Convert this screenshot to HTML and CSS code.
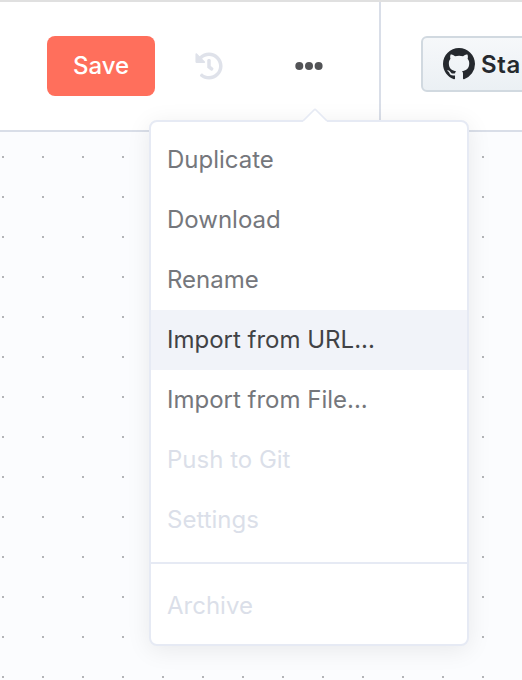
FILE: index.html
```html
<!DOCTYPE html>
<html lang="en">
<head>
<meta charset="utf-8">
<title>Workflow</title>
<link rel="stylesheet" href="styles.css">
</head>
<body>
<div class="app">
  <header class="header">
    <div class="actions">
      <button class="save">Save</button>
      <svg class="history" viewBox="0 0 512 512"><path fill="currentColor" d="M504 255.531c.253 136.64-111.18 248.372-247.82 248.468-59.015.042-113.223-20.53-155.822-54.911-11.077-8.94-11.905-25.541-1.839-35.607l11.267-11.267c8.609-8.609 22.353-9.551 31.891-1.984C173.062 425.135 212.781 440 256 440c101.705 0 184-82.311 184-184 0-101.705-82.311-184-184-184-48.814 0-93.149 18.969-126.068 49.932l50.754 50.754c10.08 10.08 2.941 27.314-11.313 27.314H24c-8.837 0-16-7.163-16-16V38.627c0-14.254 17.234-21.393 27.314-11.314l49.372 49.372C129.209 34.136 189.552 8 256 8c136.81 0 247.747 110.78 248 247.531zm-180.912 78.784l9.823-12.63c8.138-10.463 6.253-25.542-4.21-33.679L288 256.349V152c0-13.255-10.745-24-24-24h-16c-13.255 0-24 10.745-24 24v135.651l65.409 50.874c10.463 8.137 25.541 6.253 33.679-4.21z"/></svg>
      <svg class="more" viewBox="0 0 28 8"><g fill="currentColor"><circle cx="4.3" cy="4" r="4"/><circle cx="14" cy="4" r="4"/><circle cx="23.6" cy="4" r="4"/></g></svg>
    </div>
    <div class="github">
      <a class="star">
        <svg class="octocat" viewBox="0 0 16 16"><path fill="currentColor" d="M8 0C3.58 0 0 3.58 0 8c0 3.54 2.29 6.53 5.47 7.59.4.07.55-.17.55-.38 0-.19-.01-.82-.01-1.49-2.01.37-2.53-.49-2.69-.94-.09-.23-.48-.94-.82-1.13-.28-.15-.68-.52-.01-.53.63-.01 1.08.58 1.23.82.72 1.21 1.87.87 2.33.66.07-.52.28-.87.51-1.07-1.78-.2-3.64-.89-3.64-3.95 0-.87.31-1.59.82-2.15-.08-.2-.36-1.02.08-2.12 0 0 .67-.21 2.2.82.64-.18 1.32-.27 2-.27s1.36.09 2 .27c1.53-1.04 2.2-.82 2.2-.82.44 1.1.16 1.92.08 2.12.51.56.82 1.27.82 2.15 0 3.07-1.87 3.75-3.65 3.95.29.25.54.73.54 1.48 0 1.07-.01 1.93-.01 2.2 0 .21.15.46.55.38A8.01 8.01 0 0 0 16 8c0-4.42-3.58-8-8-8z"/></svg>
        <span>Sta</span>
      </a>
    </div>
  </header>
  <main class="canvas"></main>
  <div class="menu">
    <svg class="arrow" viewBox="0 0 24 14"><path class="arrow-fill" d="M0 14V12.5L12 1l12 11.5V14z"/><path class="arrow-line" d="M0 13 11 2Q12 1 13 2L24 13"/></svg>
    <ul class="items">
      <li class="item">Duplicate</li>
      <li class="item">Download</li>
      <li class="item">Rename</li>
      <li class="item active">Import from URL...</li>
      <li class="item">Import from File...</li>
      <li class="item disabled">Push to Git</li>
      <li class="item disabled">Settings</li>
      <li class="item disabled divided">Archive</li>
    </ul>
  </div>
</div>
</body>
</html>
```
FILE: styles.css
```css
* { box-sizing: border-box; }
body {
  margin: 0;
  font-family: Inter, sans-serif;
  overflow: hidden;
}
.app {
  position: relative;
  display: flex;
  flex-direction: column;
  height: 680px;
  overflow: hidden;
}
.header {
  display: flex;
  flex: none;
  height: 132px;
  border-top: 2px solid #e0e0e0;
  border-bottom: 2px solid #d9dee8;
  background: #fff;
}
.actions {
  display: flex;
  align-items: center;
  width: 381px;
  padding-left: 47px;
  border-right: 2px solid #d9dee8;
}
.save {
  width: 108px;
  height: 60px;
  padding: 0;
  border: 0;
  border-radius: 8px;
  background: #ff6f5c;
  color: #fff;
  font: 500 24px/60px Inter, sans-serif;
}
.history {
  width: 28px;
  height: 28px;
  margin-left: 40px;
  color: #dfe2ea;
}
.more {
  width: 28px;
  height: 8px;
  margin-left: 72px;
  color: #525356;
}
.github {
  flex: 1;
  min-width: 0;
  padding: 34px 0 0 40px;
}
.star {
  display: flex;
  align-items: center;
  gap: 6px;
  width: 130px;
  height: 56px;
  padding-left: 20px;
  border: 2px solid #d1d9e0;
  border-radius: 6px;
  background: linear-gradient(#f6f8fa, #ebf0f4);
  color: #25292e;
  font-size: 24px;
  font-weight: 600;
  letter-spacing: 0.6px;
}
.octocat {
  width: 32px;
  height: 32px;
}
.canvas {
  flex: 1;
  background: #fbfcfe conic-gradient(from 90deg at 38px 38px, #b3b4b7 90deg, transparent 0) 4px -14px / 40px 40px;
}
.menu {
  position: absolute;
  left: 149px;
  top: 120px;
  width: 320px;
  height: 526px;
  border: 2px solid #e6eaf4;
  border-radius: 8px;
  background: #fff;
  box-shadow: 0 4px 24px rgba(0, 0, 0, 0.08);
}
.arrow {
  position: absolute;
  left: 152px;
  top: -14px;
  width: 24px;
  height: 14px;
}
.arrow-fill { fill: #fff; }
.arrow-line {
  fill: none;
  stroke: #e6eaf4;
  stroke-width: 1.7;
}
.items {
  margin: 0;
  padding: 8px 0;
  list-style: none;
}
.item {
  height: 60px;
  padding-left: 16px;
  color: #75777c;
  font-size: 24px;
  line-height: 59px;
}
.active {
  background: #f1f3f9;
  color: #414246;
}
.disabled { color: #dbdfe9; }
.divided {
  height: 74px;
  margin-top: 12px;
  padding-top: 12px;
  border-top: 2px solid #e6eaf4;
}
```
